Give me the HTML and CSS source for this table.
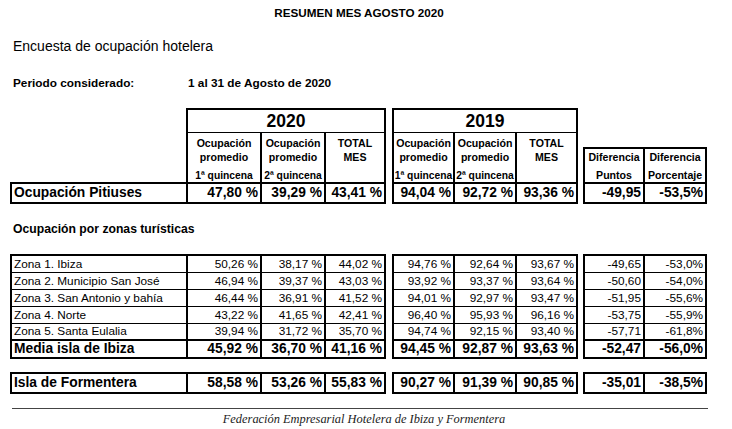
FILE: index.html
```html
<!DOCTYPE html>
<html lang="es">
<head>
<meta charset="utf-8">
<title>Resumen mes agosto 2020</title>
<link rel="stylesheet" href="styles.css">
</head>
<body>
<div class="page">
  <h1 class="title">RESUMEN MES AGOSTO 2020</h1>
  <p class="survey">Encuesta de ocupación hotelera</p>
  <div class="period"><span class="period-label">Periodo considerado:</span><span>1 al 31 de Agosto de 2020</span></div>

  <table class="sheet main">
    <colgroup>
      <col class="w-label"><col class="w-a"><col class="w-b"><col class="w-c">
      <col class="w-gap1"><col class="w-d"><col class="w-e"><col class="w-f">
      <col class="w-gap2"><col class="w-g"><col class="w-h">
    </colgroup>
    <tr class="r-year">
      <td class="e"></td>
      <td class="c year" colspan="3">2020</td>
      <td class="e"></td>
      <td class="c year" colspan="3">2019</td>
      <td class="e"></td>
      <td class="e" colspan="2"></td>
    </tr>
    <tr class="r-sub1">
      <td class="e" rowspan="2"></td>
      <td class="c sub" rowspan="2"><div class="l1">Ocupación</div><div class="l2">promedio</div><div class="l3">1ª quincena</div></td>
      <td class="c sub" rowspan="2"><div class="l1">Ocupación</div><div class="l2">promedio</div><div class="l3">2ª quincena</div></td>
      <td class="c sub" rowspan="2"><div class="l1">TOTAL</div><div class="l2">MES</div></td>
      <td class="e" rowspan="2"></td>
      <td class="c sub" rowspan="2"><div class="l1">Ocupación</div><div class="l2">promedio</div><div class="l3">1ª quincena</div></td>
      <td class="c sub" rowspan="2"><div class="l1">Ocupación</div><div class="l2">promedio</div><div class="l3">2ª quincena</div></td>
      <td class="c sub" rowspan="2"><div class="l1">TOTAL</div><div class="l2">MES</div></td>
      <td class="e" rowspan="2"></td>
      <td class="e" colspan="2"></td>
    </tr>
    <tr class="r-sub2">
      <td class="c sub diffh"><div class="l1">Diferencia</div><div class="l3">Puntos</div></td>
      <td class="c sub diffh"><div class="l1">Diferencia</div><div class="l3">Porcentaje</div></td>
    </tr>
    <tr class="r-strong">
      <td class="c name">Ocupación Pitiuses</td>
      <td class="c num">47,80 %</td>
      <td class="c num">39,29 %</td>
      <td class="c num">43,41 %</td>
      <td class="e"></td>
      <td class="c num">94,04 %</td>
      <td class="c num">92,72 %</td>
      <td class="c num">93,36 %</td>
      <td class="e"></td>
      <td class="c num">-49,95</td>
      <td class="c num">-53,5%</td>
    </tr>
  </table>

  <p class="section">Ocupación por zonas turísticas</p>

  <table class="sheet zones">
    <colgroup>
      <col class="w-label"><col class="w-a"><col class="w-b"><col class="w-c">
      <col class="w-gap1"><col class="w-d"><col class="w-e"><col class="w-f">
      <col class="w-gap2"><col class="w-g"><col class="w-h">
    </colgroup>
    <tr class="r-zone first">
      <td class="c name">Zona 1. Ibiza</td>
      <td class="c num">50,26 %</td><td class="c num">38,17 %</td><td class="c num">44,02 %</td>
      <td class="e"></td>
      <td class="c num">94,76 %</td><td class="c num">92,64 %</td><td class="c num">93,67 %</td>
      <td class="e"></td>
      <td class="c num">-49,65</td><td class="c num">-53,0%</td>
    </tr>
    <tr class="r-zone">
      <td class="c name">Zona 2. Municipio San José</td>
      <td class="c num">46,94 %</td><td class="c num">39,37 %</td><td class="c num">43,03 %</td>
      <td class="e"></td>
      <td class="c num">93,92 %</td><td class="c num">93,37 %</td><td class="c num">93,64 %</td>
      <td class="e"></td>
      <td class="c num">-50,60</td><td class="c num">-54,0%</td>
    </tr>
    <tr class="r-zone">
      <td class="c name">Zona 3. San Antonio y bahía</td>
      <td class="c num">46,44 %</td><td class="c num">36,91 %</td><td class="c num">41,52 %</td>
      <td class="e"></td>
      <td class="c num">94,01 %</td><td class="c num">92,97 %</td><td class="c num">93,47 %</td>
      <td class="e"></td>
      <td class="c num">-51,95</td><td class="c num">-55,6%</td>
    </tr>
    <tr class="r-zone">
      <td class="c name">Zona 4. Norte</td>
      <td class="c num">43,22 %</td><td class="c num">41,65 %</td><td class="c num">42,41 %</td>
      <td class="e"></td>
      <td class="c num">96,40 %</td><td class="c num">95,93 %</td><td class="c num">96,16 %</td>
      <td class="e"></td>
      <td class="c num">-53,75</td><td class="c num">-55,9%</td>
    </tr>
    <tr class="r-zone">
      <td class="c name">Zona 5. Santa Eulalia</td>
      <td class="c num">39,94 %</td><td class="c num">31,72 %</td><td class="c num">35,70 %</td>
      <td class="e"></td>
      <td class="c num">94,74 %</td><td class="c num">92,15 %</td><td class="c num">93,40 %</td>
      <td class="e"></td>
      <td class="c num">-57,71</td><td class="c num">-61,8%</td>
    </tr>
    <tr class="r-strong r-media">
      <td class="c name">Media isla de Ibiza</td>
      <td class="c num">45,92 %</td><td class="c num">36,70 %</td><td class="c num">41,16 %</td>
      <td class="e"></td>
      <td class="c num">94,45 %</td><td class="c num">92,87 %</td><td class="c num">93,63 %</td>
      <td class="e"></td>
      <td class="c num">-52,47</td><td class="c num">-56,0%</td>
    </tr>
  </table>

  <table class="sheet island">
    <colgroup>
      <col class="w-label"><col class="w-a"><col class="w-b"><col class="w-c">
      <col class="w-gap1"><col class="w-d"><col class="w-e"><col class="w-f">
      <col class="w-gap2"><col class="w-g"><col class="w-h">
    </colgroup>
    <tr class="r-strong">
      <td class="c name">Isla de Formentera</td>
      <td class="c num">58,58 %</td><td class="c num">53,26 %</td><td class="c num">55,83 %</td>
      <td class="e"></td>
      <td class="c num">90,27 %</td><td class="c num">91,39 %</td><td class="c num">90,85 %</td>
      <td class="e"></td>
      <td class="c num">-35,01</td><td class="c num">-38,5%</td>
    </tr>
  </table>

  <footer class="footer">
    <p class="footer-text">Federación Empresarial Hotelera de Ibiza y Formentera</p>
  </footer>
</div>
</body>
</html>
```

FILE: styles.css
```css
* { box-sizing: border-box; }

body {
  margin: 0;
  background: #ffffff;
  color: #000000;
  font-family: "Liberation Sans", Arial, sans-serif;
}

.page {
  width: 708px;
  padding-left: 10px;
}

.title {
  margin: 0;
  padding-top: 6px;
  font-size: 11.7px;
  line-height: 14px;
  font-weight: bold;
  text-align: center;
}

.survey {
  margin: 18px 0 0;
  padding-left: 3px;
  font-size: 14px;
  line-height: 16px;
}

.period {
  margin-top: 22px;
  padding-left: 3px;
  font-size: 11.8px;
  line-height: 14px;
  font-weight: bold;
}

.period-label {
  display: inline-block;
  width: 175px;
}

.section {
  margin: 18px 0 0;
  padding-left: 3px;
  font-size: 12.2px;
  line-height: 14px;
  font-weight: bold;
}

/* sheet tables */
.sheet {
  border-collapse: collapse;
  table-layout: fixed;
  width: 695px;
}

.main { margin-top: 18px; }
.zones { margin-top: 18px; }
.island { margin-top: 13px; }

.w-label { width: 176px; }
.w-a { width: 74px; }
.w-b { width: 64px; }
.w-c { width: 60px; }
.w-gap1 { width: 8px; }
.w-d { width: 61px; }
.w-e { width: 62px; }
.w-f { width: 61px; }
.w-gap2 { width: 7px; }
.w-g { width: 60px; }
.w-h { width: 62px; }

.sheet td {
  padding: 0;
  white-space: nowrap;
  overflow: hidden;
}

.sheet td.e {
  border: none;
}

.sheet td.c {
  border-left: 2px solid #000;
  border-right: 2px solid #000;
  border-top: 1px solid #000;
  border-bottom: 1px solid #000;
}

/* header */
.r-year { height: 23px; }
.r-sub1 { height: 16px; }
.r-sub2 { height: 35px; }

.sheet td.year {
  border-top: 2px solid #000;
  text-align: center;
  vertical-align: middle;
  font-size: 17.5px;
  font-weight: bold;
  line-height: 20px;
}

.sheet td.sub {
  vertical-align: top;
  text-align: center;
  font-weight: bold;
  font-size: 10.6px;
  padding-top: 3px;
}

.sub .l1,
.sub .l2 {
  line-height: 14px;
}

.sub .l3 {
  margin-top: 6px;
  line-height: 12px;
  font-size: 10.3px;
}

.sheet td.diffh {
  border-top: 2px solid #000;
  padding-top: 1px;
}

.diffh .l3 {
  margin-top: 5px;
  font-size: 10.6px;
}

/* data rows */
.sheet td.name {
  text-align: left;
  padding-left: 2px;
}

.sheet td.num {
  text-align: right;
  padding-right: 2px;
}

.r-strong { height: 20px; }

.r-strong td.c {
  border-top: 2px solid #000;
  border-bottom: 2px solid #000;
  font-weight: bold;
  font-size: 13.8px;
  line-height: 16px;
  vertical-align: middle;
}

.r-media { height: 18px; }

.r-zone { height: 17px; }

.r-zone td.c {
  font-size: 11.8px;
  line-height: 14px;
  vertical-align: middle;
}

.r-zone.first td.c {
  border-top: 2px solid #000;
}

/* footer */
.footer {
  margin-top: 14px;
  margin-left: 2px;
  width: 696px;
  border-top: 1px solid #444;
}

.footer-text {
  margin: 0;
  padding-top: 3px;
  padding-left: 8px;
  text-align: center;
  font-family: "Liberation Serif", "Times New Roman", serif;
  font-style: italic;
  font-size: 12.4px;
  line-height: 14px;
  color: #222;
}
```
